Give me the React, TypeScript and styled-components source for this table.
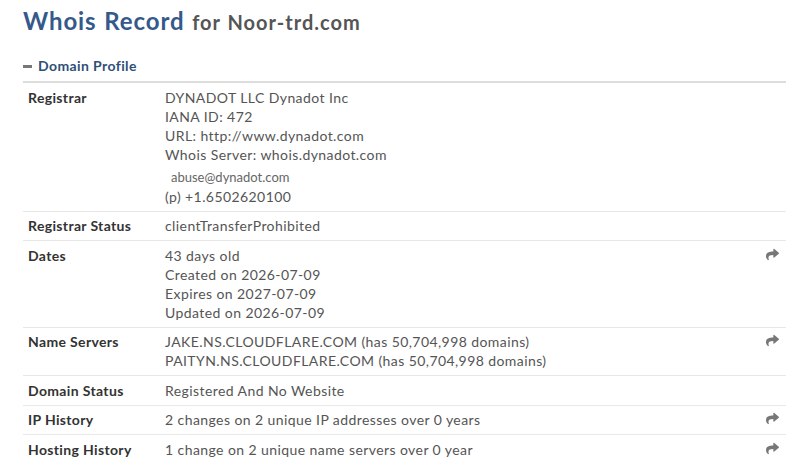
import React from "react";
import styled, { createGlobalStyle } from "styled-components";
import { FaShare } from "react-icons/fa";

const Global = createGlobalStyle`
  html, body { margin: 0; padding: 0; background: #fff; }
  body { font-family: Lato, "Open Sans", sans-serif; color: #555; }
`;

const Page = styled.div`
  padding: 7px 14px 0 23px;
`;

const Title = styled.h1`
  margin: 0;
  font-size: 24px;
  line-height: 1.2;
  font-weight: 700;
  color: #34598a;
  letter-spacing: 0.9px;
  word-spacing: 1px;
`;

const TitleSub = styled.small`
  font-size: 20px;
  font-weight: 700;
  color: #555;
  letter-spacing: 1px;
`;

const SectionHead = styled.div`
  margin-top: 21px;
  display: flex;
  align-items: center;
  gap: 6px;
  font-size: 14px;
  line-height: 18.5px;
  font-weight: 700;
  color: #2f4f78;
  letter-spacing: 0.4px;
  padding-bottom: 6px;
  border-bottom: 2px solid #ddd;
`;

const Minus = styled.span`
  display: inline-block;
  width: 9px;
  height: 3px;
  background: #777;
`;

const Row = styled.div<{ $last?: boolean }>`
  display: grid;
  grid-template-columns: 142px 1fr 20px;
  padding: 4.5px 7px 5px 0;
  border-bottom: ${(p) => (p.$last ? "none" : "1px solid #e8e8e8")};
  font-size: 14px;
  line-height: 19px;
`;

const Label = styled.div`
  padding-left: 5px;
  font-weight: 700;
  color: #333;
  letter-spacing: 0.35px;
`;

const Value = styled.div`
  color: #555;
  letter-spacing: 0.42px;
`;

const Line = styled.div``;

const Email = styled.div`
  padding: 3px 0 0 6px;
  line-height: 20px;
  font-size: 13px;
  color: #666;
  letter-spacing: 0;
`;

const IconCell = styled.div`
  display: flex;
  justify-content: flex-end;
  padding-top: 2px;
  color: #777;
`;

type R = { label: string; lines: React.ReactNode[]; icon?: boolean };

const rows: R[] = [
  {
    label: "Registrar Status",
    lines: ["clientTransferProhibited"],
  },
  {
    label: "Dates",
    lines: ["43 days old", "Created on 2026-07-09", "Expires on 2027-07-09", "Updated on 2026-07-09"],
    icon: true,
  },
  {
    label: "Name Servers",
    lines: [
      "JAKE.NS.CLOUDFLARE.COM (has 50,704,998 domains)",
      "PAITYN.NS.CLOUDFLARE.COM (has 50,704,998 domains)",
    ],
    icon: true,
  },
  { label: "Domain Status", lines: ["Registered And No Website"] },
  { label: "IP History", lines: ["2 changes on 2 unique IP addresses over 0 years"], icon: true },
  { label: "Hosting History", lines: ["1 change on 2 unique name servers over 0 year"], icon: true },
];

export default function App() {
  return (
    <>
      <Global />
      <Page>
        <Title>
          Whois Record <TitleSub>for Noor-trd.com</TitleSub>
        </Title>
        <SectionHead>
          <Minus />
          Domain Profile
        </SectionHead>
        <Row>
          <Label>Registrar</Label>
          <Value>
            <Line>DYNADOT LLC Dynadot Inc</Line>
            <Line>IANA ID: 472</Line>
            <Line>URL: http://www.dynadot.com</Line>
            <Line>Whois Server: whois.dynadot.com</Line>
            <Email>abuse@dynadot.com</Email>
            <Line>(p) +1.6502620100</Line>
          </Value>
          <IconCell />
        </Row>
        {rows.map((r, i) => (
          <Row key={r.label} $last={i === rows.length - 1}>
            <Label>{r.label}</Label>
            <Value>
              {r.lines.map((l, j) => (
                <Line key={j}>{l}</Line>
              ))}
            </Value>
            <IconCell>{r.icon ? <FaShare size={13} /> : null}</IconCell>
          </Row>
        ))}
      </Page>
    </>
  );
}
